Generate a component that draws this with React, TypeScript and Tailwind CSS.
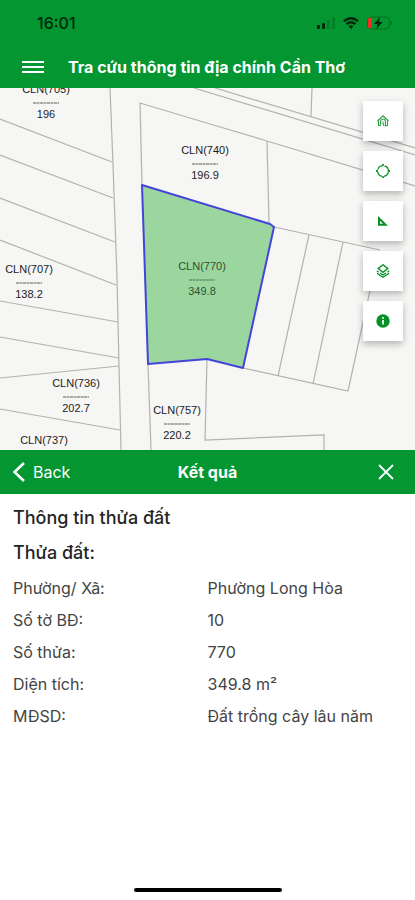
import type { ReactNode } from "react";

const boundaries = [
  "M110 0 L113 77 L117 190 L119 278 L121 362",
  "M0 31 L112 74",
  "M0 67 L113 110",
  "M0 110 L115 154",
  "M0 152 L116 197",
  "M0 213 L118 234",
  "M0 249 L119 270",
  "M0 290 L119 278",
  "M0 321 L120 342",
  "M142 97 L140 15 L210 36 L267 53 L415 98",
  "M215 0 L415 60",
  "M194 0 L415 67",
  "M312 0 L311 28",
  "M267 53 L269 135",
  "M274 139 L380 162",
  "M371 198 L348 303 L243 280",
  "M309 147 L278 288",
  "M343 154 L313 296",
  "M148 276 L151 362",
  "M207 271 L205 352 L324 347 L324 362",
];

const parcels = [
  { x: 46, y: 5, code: "CLN(705)", area: "196" },
  { x: 205, y: 66, code: "CLN(740)", area: "196.9" },
  { x: 202, y: 182, code: "CLN(770)", area: "349.8", selected: true },
  { x: 29, y: 185, code: "CLN(707)", area: "138.2" },
  { x: 76, y: 299, code: "CLN(736)", area: "202.7" },
  { x: 177, y: 326, code: "CLN(757)", area: "220.2" },
  { x: 44, y: 356, code: "CLN(737)", area: "" },
];

const tools: { label: string; icon: ReactNode }[] = [
  {
    label: "Trang chủ",
    icon: (
      <g fill="none" stroke="currentColor" strokeWidth="1.1" opacity="0.85">
        <path d="M1.5 7 L7 1.800 L12.500 7 M2.500 6.500 V11.500 H4.500 M11.500 6.500 V11.500 H9.500" />
        <path d="M4.600 11.500 V7.500 Q5 5 7 5 Q9.400 5 9.400 7.500 V12.500 M7 7.500 V9.500 L8 12" />
      </g>
    ),
  },
  {
    label: "Vị trí",
    icon: (
      <g fill="none" stroke="currentColor" strokeWidth="1.3">
        <circle cx="7" cy="7" r="5.400" strokeDasharray="6.500 1.982" strokeDashoffset="-0.991" />
        <path d="M7 0 V1.800 M7 12.200 V14 M0 7 H1.800 M12.200 7 H14" strokeWidth="1.8" />
      </g>
    ),
  },
  {
    label: "Đo đạc",
    icon: <path fill="currentColor" fillRule="evenodd" d="M2 2 L12 11.800 H2 Z M4 6.800 V9.800 H7 Z" />,
  },
  {
    label: "Lớp bản đồ",
    icon: (
      <g fill="none" stroke="currentColor" strokeWidth="1.4">
        <path d="M7 0.800 L11.800 4.600 L7 8.400 L2.200 4.600 Z" />
        <path d="M0.900 6.800 L2.500 8.200 M13.100 6.800 L11.500 8.200 M1 9.200 L7 13.300 L13 9.200 M4 9 L7 11 L10 9" strokeWidth="1.2" />
      </g>
    ),
  },
  {
    label: "Thông tin",
    icon: (
      <g>
        <circle cx="7" cy="7" r="6.700" fill="currentColor" />
        <path d="M7 3 V4.700 M7 5.900 V10.600" fill="none" stroke="#d5efd9" strokeWidth="2" />
      </g>
    ),
  },
];

const details = [
  ["Phường/ Xã:", "Phường Long Hòa"],
  ["Số tờ BĐ:", "10"],
  ["Số thửa:", "770"],
  ["Diện tích:", "349.8 m²"],
  ["MĐSD:", "Đất trồng cây lâu năm"],
];

function StatusBar() {
  return (
    <div className="flex h-[46px] items-center justify-between pr-[22px] pl-[37px] text-[#02270a]">
      <span className="text-base font-medium">16:01</span>
      <div className="flex items-center gap-2">
        <svg className="h-3 w-[18px]" viewBox="0 0 18 12" fill="currentColor" aria-hidden="true">
          <rect x="0" y="8" width="3" height="4" rx="1" />
          <rect x="5" y="6" width="3" height="6" rx="1" />
          <rect x="10" y="3" width="3" height="9" rx="1" opacity="0.2" />
          <rect x="15" y="0" width="3" height="12" rx="1" opacity="0.2" />
        </svg>
        <svg className="h-3 w-4" viewBox="0 0 16 12" fill="none" stroke="currentColor" strokeWidth="2.2" aria-hidden="true">
          <path d="M0.800 4.300 Q8 -1.800 15.200 4.300" />
          <path d="M3.500 7.200 Q8 3.300 12.500 7.200" />
          <path d="M5.600 9.300 Q8 7.400 10.400 9.300 L8 11.900 Z" fill="currentColor" stroke="none" />
        </svg>
        <svg className="h-[14px] w-[26px]" viewBox="0 0 26 14" aria-hidden="true">
          <rect x="0.500" y="1" width="22" height="12" rx="4" fill="none" stroke="currentColor" opacity="0.35" />
          <path d="M24 5 Q26 7 24 9 Z" fill="currentColor" opacity="0.5" />
          <rect x="1" y="2" width="4" height="10" rx="1" fill="#f52c25" />
          <path d="M13 1 L7 8 H10.500 L9.500 13 L15.500 6 H12 Z" fill="currentColor" />
        </svg>
      </div>
    </div>
  );
}

function CadastralMap() {
  return (
    <section className="relative overflow-hidden bg-[#f6f6f5]" aria-label="Bản đồ địa chính">
      <svg className="block w-full" viewBox="0 0 415 362">
        <g fill="none" stroke="#b2b2b1" strokeWidth="1.2">
          {boundaries.map((d) => (
            <path key={d} d={d} />
          ))}
        </g>
        <path
          d="M142 97 L270 136 L274 139 L243 280 L207 271 L148 276 Z"
          fill="#9bd69f"
          stroke="#4444d8"
          strokeWidth="2"
          strokeLinejoin="round"
        />
        {parcels.map((p) => (
          <g
            key={p.code}
            textAnchor="middle"
            fill={p.selected ? "#2c5230" : "#1c1c1c"}
            stroke={p.selected ? "#2c5230" : "#1c1c1c"}
            className="font-['Liberation_Sans',Arial,sans-serif] text-[11px]"
          >
            <text x={p.x} y={p.y} stroke="none">{p.code}</text>
            {p.area && (
              <>
                <path d={`M${p.x - 13} ${p.y + 10} h26`} strokeDasharray="3 0.500" opacity="0.7" />
                <text x={p.x} y={p.y + 25} stroke="none">{p.area}</text>
              </>
            )}
          </g>
        ))}
      </svg>
      <div className="absolute top-[13px] right-3 flex flex-col gap-[10px]">
        {tools.map((tool) => (
          <button
            key={tool.label}
            type="button"
            aria-label={tool.label}
            className="flex size-10 items-center justify-center bg-white text-[#079027] shadow-[0_3px_7px_rgba(0,0,0,0.28)]"
          >
            <svg className="size-[14px]" viewBox="0 0 14 14" aria-hidden="true">
              {tool.icon}
            </svg>
          </button>
        ))}
      </div>
    </section>
  );
}

function ResultSheet() {
  return (
    <section className="flex flex-1 flex-col">
      <header className="grid h-11 grid-cols-3 items-center bg-[#039631] px-3 text-base text-white">
        <button type="button" className="flex items-center gap-2 justify-self-start">
          <svg className="h-5 w-[13px]" viewBox="0 0 13 20" fill="none" stroke="currentColor" strokeWidth="2.5" aria-hidden="true">
            <path d="M12 1 L2.500 10 L12 19" />
          </svg>
          Back
        </button>
        <h2 className="justify-self-center font-bold">Kết quả</h2>
        <button type="button" aria-label="Đóng" className="mr-2 justify-self-end">
          <svg className="size-[18px]" viewBox="0 0 18 18" fill="none" stroke="currentColor" strokeWidth="1.8" aria-hidden="true">
            <path d="M2 2 L16 16 M16 2 L2 16" />
          </svg>
        </button>
      </header>
      <div className="px-[13px] pt-[7px] text-[#252525]">
        <h3 className="text-lg leading-[34px] font-medium">Thông tin thửa đất</h3>
        <h4 className="text-lg leading-9 font-medium">Thửa đất:</h4>
        <table className="mt-px w-full table-fixed text-left text-base leading-8 text-[#444444]">
          <tbody>
            {details.map(([label, value]) => (
              <tr key={label}>
                <th scope="row" className="w-1/2 p-0 font-normal">{label}</th>
                <td className="p-0">{value}</td>
              </tr>
            ))}
          </tbody>
        </table>
      </div>
    </section>
  );
}

export default function App() {
  return (
    <main className="flex min-h-screen flex-col bg-white font-['Inter',sans-serif]">
      <header className="bg-[#039631]">
        <StatusBar />
        <div className="flex h-[42px] items-center gap-6 px-[22px] text-white">
          <button type="button" aria-label="Mở menu">
            <svg className="h-[14px] w-[22px]" viewBox="0 0 22 14" stroke="currentColor" strokeWidth="2" aria-hidden="true">
              <path d="M0 2 H22 M0 7 H22 M0 12 H22" />
            </svg>
          </button>
          <h1 className="text-base font-bold whitespace-nowrap">Tra cứu thông tin địa chính Cần Thơ</h1>
        </div>
      </header>
      <CadastralMap />
      <ResultSheet />
      <div className="mx-auto mb-2 h-1 w-[148px] rounded-full bg-black" />
    </main>
  );
}
